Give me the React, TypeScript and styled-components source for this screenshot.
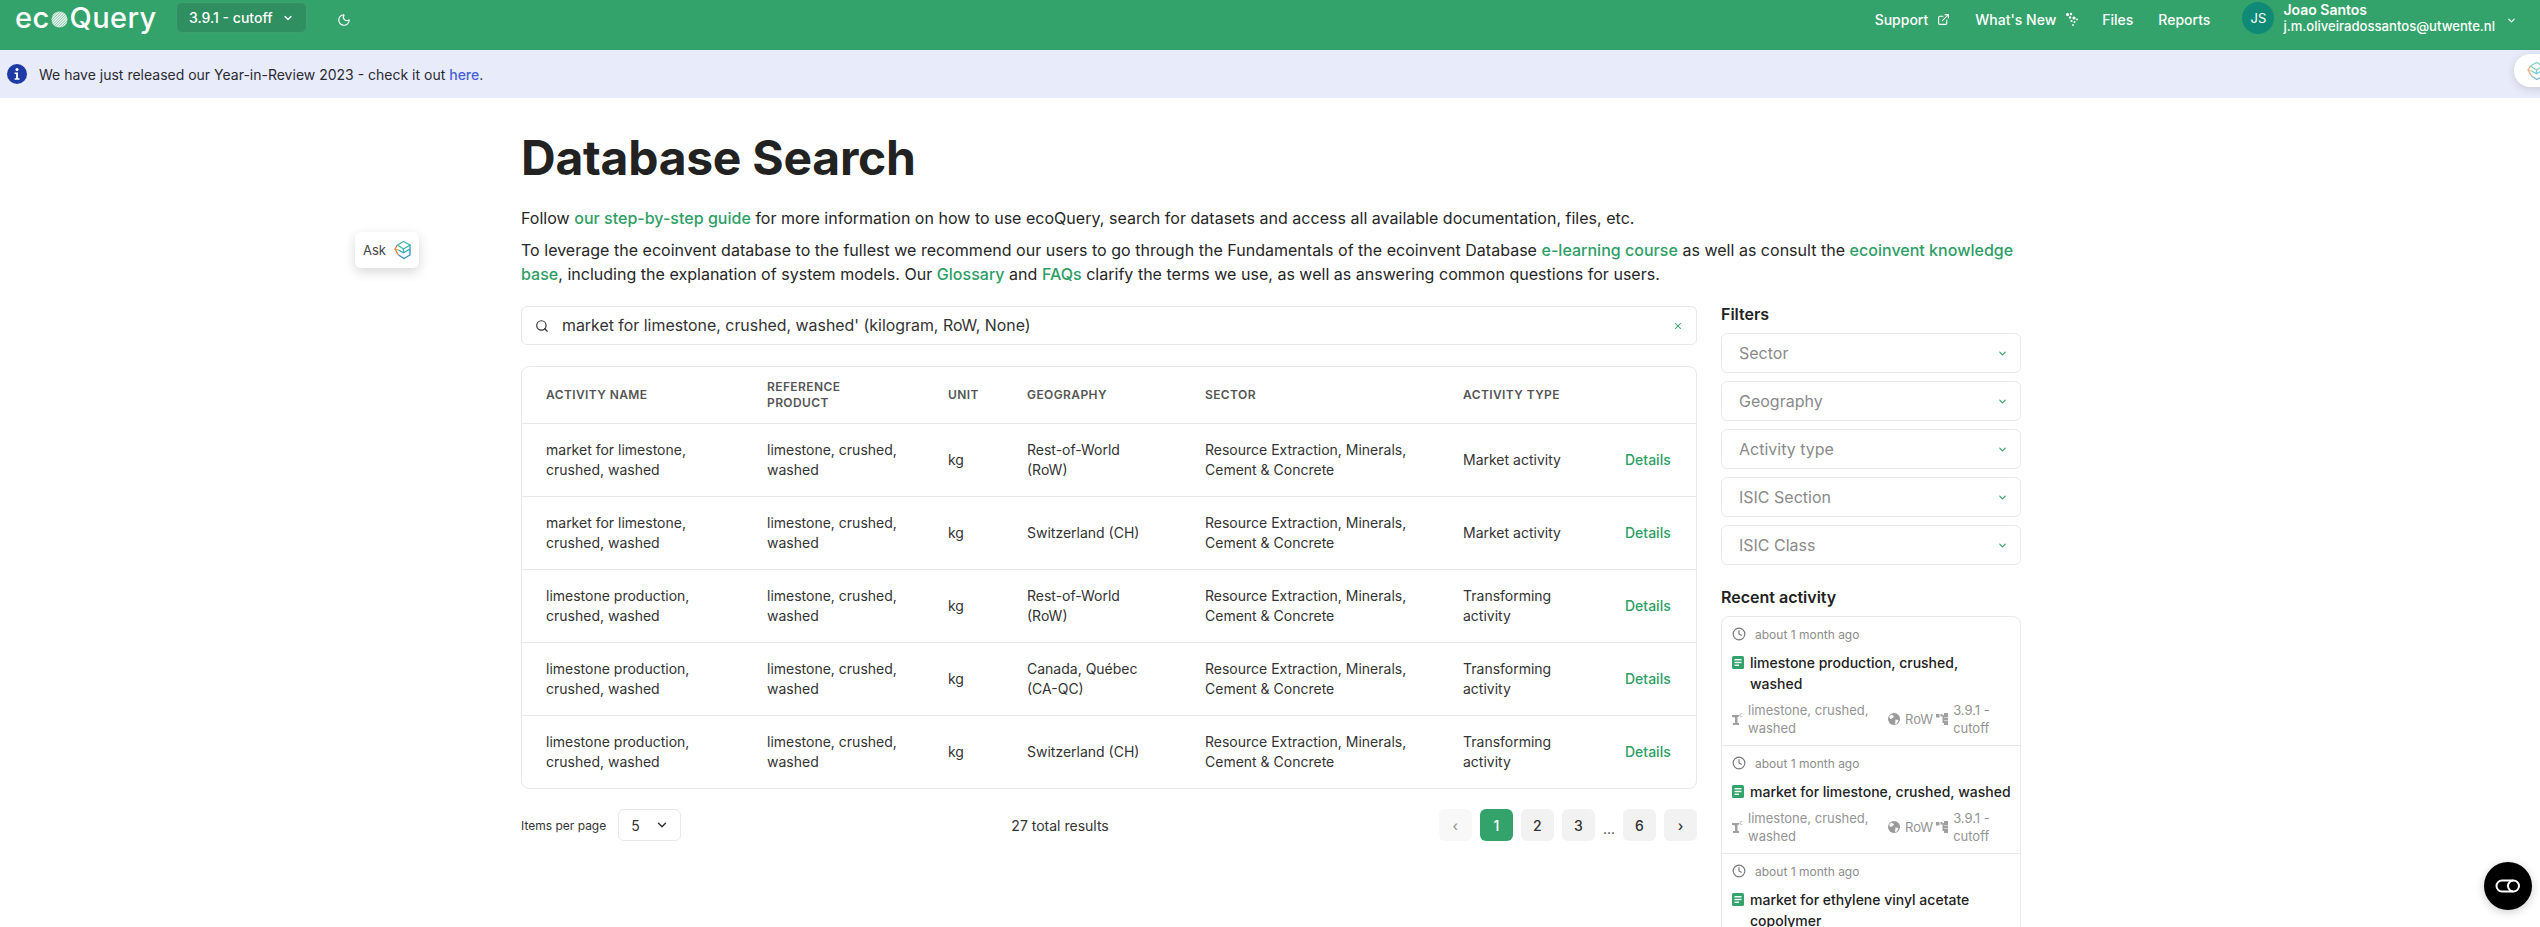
import React from "react"
import styled, { createGlobalStyle } from "styled-components"
import { ChevronDown, Clock, ExternalLink, Moon, Search, X } from "lucide-react"

const GREEN = "#34a36b"
const LINK = "#2e9e66"
const BORDER = "#e9e9e9"

const GlobalStyle = createGlobalStyle`
  html, body {
    margin: 0;
    padding: 0;
    height: 927px;
    overflow: hidden;
    background: #fff;
    font-family: Inter, "Liberation Sans", sans-serif;
    color: #222;
  }
  * { box-sizing: border-box; }
`

const Page = styled.div`
  position: relative;
  width: 2540px;
  height: 927px;
  overflow: hidden;
`

const Header = styled.header`
  height: 50px;
  background: ${GREEN};
  color: #fff;
  display: flex;
  justify-content: space-between;
  padding: 2px 23px 0 15px;
`
const HeaderLeft = styled.div`
  display: flex;
  align-items: flex-start;
`
const Logo = styled.div`
  display: flex;
  align-items: center;
  height: 31px;
  width: 161px;
  font-size: 29px;
  font-weight: 500;
  letter-spacing: 0.4px;
  line-height: 31px;
`
const VersionSelect = styled.div`
  width: 131px;
  height: 31px;
  background: #2f8f60;
  border: 1px solid #3f9f6f;
  border-radius: 6px;
  display: flex;
  align-items: center;
  gap: 10px;
  padding-left: 12px;
  font-size: 14px;
  font-weight: 500;
`
const ThemeToggle = styled.div`
  margin: 9px 0 0 30px;
  height: 18px;
`
const HeaderRight = styled.nav`
  display: flex;
  align-items: flex-start;
`
const NavItem = styled.a<{ $gap: number }>`
  display: flex;
  align-items: center;
  height: 34px;
  gap: 9px;
  margin-right: ${(p) => p.$gap}px;
  font-size: 14px;
  font-weight: 500;
  color: #fff;
`
const Avatar = styled.div`
  width: 32px;
  height: 32px;
  border-radius: 50%;
  background: #0f8a76;
  display: flex;
  align-items: center;
  justify-content: center;
  font-size: 13px;
  margin-right: 9px;
`
const UserBlock = styled.div`
  font-size: 13.1px;
  line-height: 16px;
  font-weight: 500;
  margin-right: 11px;
`
const UserName = styled.div`
  font-size: 14px;
  font-weight: 600;
`
const UserChevron = styled.div`
  margin-top: 8px;
`

const Banner = styled.div`
  height: 48px;
  background: #e8ebf9;
  display: flex;
  align-items: center;
  gap: 12px;
  padding-left: 7px;
  font-size: 14px;
  color: #2a2a33;
`
const BannerLink = styled.a`
  color: #4461d8;
  font-weight: 500;
`

const Main = styled.main`
  width: 1500px;
  margin-left: 521px;
  padding-top: 32px;
`
const Title = styled.h1`
  margin: 0 0 20px;
  font-size: 48px;
  line-height: 56px;
  font-weight: 700;
  letter-spacing: -0.26px;
  color: #222;
`
const Paragraph = styled.p<{ $mb: number }>`
  margin: 0 0 ${(p) => p.$mb}px;
  font-size: 16px;
  line-height: 24px;
  letter-spacing: 0.02px;
  color: #262626;
`
const TextLink = styled.a`
  color: ${LINK};
  font-weight: 500;
`

const Columns = styled.div`
  display: grid;
  grid-template-columns: 1176px 300px;
  gap: 24px;
  margin-top: 20px;
`

const SearchBox = styled.div`
  height: 39px;
  border: 1px solid ${BORDER};
  border-radius: 6px;
  display: flex;
  align-items: center;
  padding: 0 13px;
  font-size: 15.9px;
  color: #333;
`
const SearchText = styled.span`
  margin-left: 13px;
  flex: 1;
`

const TableCard = styled.div`
  margin-top: 21px;
  border: 1px solid ${BORDER};
  border-radius: 8px;
`
const Table = styled.table`
  width: 100%;
  table-layout: fixed;
  border-collapse: collapse;
  font-size: 14px;
  line-height: 20px;
  color: #333;
`
const Th = styled.th<{ $w: number }>`
  width: ${(p) => p.$w}px;
  height: 56px;
  padding: 0 24px;
  text-align: left;
  font-size: 12px;
  line-height: 16px;
  font-weight: 600;
  letter-spacing: 0.4px;
  color: #555;
  text-transform: uppercase;
`
const Tr = styled.tr`
  height: 73px;
  border-top: 1px solid ${BORDER};
`
const Td = styled.td`
  padding: 0 24px;
`
const DetailsCell = styled.td`
  padding: 0 24px;
  color: ${LINK};
  font-weight: 500;
`

const Footer = styled.div`
  margin-top: 20px;
  display: flex;
  justify-content: space-between;
  align-items: center;
`
const PerPage = styled.div`
  display: flex;
  align-items: center;
  gap: 12px;
  font-size: 12px;
  color: #333;
`
const PerPageSelect = styled.div`
  width: 63px;
  height: 32px;
  border: 1px solid ${BORDER};
  border-radius: 6px;
  display: flex;
  align-items: center;
  justify-content: space-between;
  padding: 0 11px 0 12px;
  font-size: 14px;
`
const Total = styled.div`
  font-size: 14px;
  color: #333;
`
const Pager = styled.div`
  display: flex;
  gap: 8px;
  align-items: center;
`
const PageButton = styled.div<{ $active?: boolean; $muted?: boolean }>`
  width: 33px;
  height: 32px;
  border-radius: 6px;
  display: flex;
  align-items: center;
  justify-content: center;
  font-size: 14px;
  font-weight: 500;
  background: ${(p) => (p.$active ? GREEN : p.$muted ? "#f9f8f8" : "#f3f2f2")};
  color: ${(p) => (p.$active ? "#fff" : p.$muted ? "#999" : "#333")};
`
const Ellipsis = styled.div`
  font-size: 14px;
  color: #444;
  margin-top: 6px;
`

const SectionTitle = styled.h2`
  margin: 0 0 10px;
  font-size: 16px;
  line-height: 17px;
  font-weight: 600;
  color: #222;
`
const FilterList = styled.div`
  display: flex;
  flex-direction: column;
  gap: 8px;
  margin-bottom: 24px;
`
const FilterBox = styled.div`
  height: 40px;
  border: 1px solid ${BORDER};
  border-radius: 6px;
  display: flex;
  align-items: center;
  justify-content: space-between;
  padding: 0 12px 0 17px;
  font-size: 16px;
  color: #8a8a8a;
`
const ActivityList = styled.div`
  border: 1px solid ${BORDER};
  border-radius: 8px 8px 0 0;
`
const ActivityItem = styled.div`
  padding: 7px 8px 8px 10px;
  & + & {
    border-top: 1px solid ${BORDER};
  }
`
const ActivityTime = styled.div`
  display: flex;
  align-items: center;
  gap: 9px;
  height: 20px;
  font-size: 12px;
  color: #8c8c8c;
`
const ActivityTitle = styled.div`
  display: flex;
  margin-top: 8px;
  gap: 6px;
  font-size: 14px;
  line-height: 21px;
  font-weight: 500;
  color: #222;
`
const DocIconWrap = styled.div`
  flex: none;
  height: 21px;
  display: flex;
  align-items: center;
`
const ActivityMeta = styled.div`
  display: flex;
  align-items: center;
  margin-top: 7px;
  font-size: 13px;
  line-height: 18px;
  color: #949494;
`
const MetaText = styled.div<{ $w: number }>`
  width: ${(p) => p.$w}px;
  flex: none;
`

const AskButton = styled.div`
  position: absolute;
  left: 355px;
  top: 232px;
  width: 64px;
  height: 36px;
  background: #fff;
  border-radius: 6px;
  box-shadow: 0 4px 12px rgba(0, 0, 0, 0.16);
  display: flex;
  align-items: center;
  gap: 7px;
  padding-left: 8px;
  font-size: 13px;
  color: #444;
`
const SideWidget = styled.div`
  position: absolute;
  left: 2514px;
  top: 54px;
  width: 50px;
  height: 33px;
  background: #fff;
  border-radius: 16px;
  box-shadow: 0 2px 8px rgba(0, 0, 0, 0.14);
  padding: 7px 0 0 12px;
`
const ChatBubble = styled.div`
  position: absolute;
  left: 2484px;
  top: 862px;
  width: 48px;
  height: 48px;
  border-radius: 50%;
  background: #000;
  box-shadow: 0 2px 10px rgba(0, 0, 0, 0.2);
  display: flex;
  align-items: center;
  justify-content: center;
`

const LogoDisc = () => (
  <svg width="17" height="17" viewBox="0 0 18 18" style={{ margin: "3px 2px 0 1px" }}>
    <defs>
      <pattern id="hatch" width="2" height="2" patternUnits="userSpaceOnUse" patternTransform="rotate(45)">
        <rect width="2" height="2" fill="#7cc5a0" />
        <rect width="1.1" height="2" fill="#fff" />
      </pattern>
    </defs>
    <circle cx="9" cy="9" r="8.5" fill="url(#hatch)" />
  </svg>
)

const Sparkles = () => (
  <svg width="13" height="14" viewBox="0 0 13 14" fill="#fff">
    <circle cx="2.5" cy="2.5" r="1.6" />
    <circle cx="6" cy="2" r="1.2" />
    <circle cx="5" cy="5.5" r="1.2" />
    <circle cx="9" cy="6" r="1.6" />
    <circle cx="12" cy="7.5" r="0.9" />
    <circle cx="6.5" cy="9" r="1.1" />
    <circle cx="9.5" cy="10" r="1" />
    <circle cx="8" cy="13" r="0.9" />
  </svg>
)

const InfoBadge = () => (
  <svg width="20" height="20" viewBox="0 0 20 20">
    <circle cx="10" cy="10" r="10" fill="#1e3aa5" />
    <circle cx="10" cy="5.6" r="1.5" fill="#fff" />
    <path d="M7.6 8.6h3.4v5.6h1.5v1.5H7.6v-1.5h1.5v-4.1H7.6z" fill="#fff" />
  </svg>
)

const AskLogo = ({ soft = false }: { soft?: boolean }) => (
  <svg width="20" height="20" viewBox="0 0 20 20" fill="none" strokeWidth="1.3" opacity={soft ? 0.65 : 1}>
    <path d="M4.5 5 10.5 1.5 17 5 10.5 9z" stroke="#3fb6a8" />
    <path d="M17 5v4l-6.5 3.8L5.5 10" stroke="#2aa5bf" />
    <path d="M17 9v6l-6 3.5L5.5 15" stroke="#2f8fb8" />
    <path d="M10.5 9v3.8" stroke="#3fb6a8" />
    <path d="M4.5 5 2 9l3.5 6" stroke="#e2803f" />
    <path d="M2 9l3.5 1" stroke="#d9a13f" />
  </svg>
)

const DocIcon = () => (
  <svg width="12" height="13" viewBox="0 0 12 13">
    <rect width="12" height="13" rx="1.5" fill={GREEN} />
    <rect x="2.5" y="3" width="7" height="1.4" fill="#fff" />
    <rect x="2.5" y="5.8" width="7" height="1.4" fill="#fff" />
    <rect x="2.5" y="8.6" width="4.5" height="1.4" fill="#fff" />
  </svg>
)

const ProductIcon = () => (
  <svg width="11" height="12" viewBox="0 0 11 12" fill="#a0a0a0" style={{ flex: "none", marginRight: 5 }}>
    <path d="M0 2h7v1.6L5.5 4v6H7v2H1v-2h2V4.4L0 4z" />
    <path d="M7.5 2a1.8 1.8 0 0 1 3-1.3l-.5.6a1 1 0 1 0 0 1.4l.5.6a1.8 1.8 0 0 1-3-1.3z" />
  </svg>
)

const GlobeIcon = () => (
  <svg width="12" height="12" viewBox="0 0 12 12" style={{ flex: "none", marginRight: 5 }}>
    <circle cx="6" cy="6" r="6" fill="#9a9a9a" />
    <path d="M3 1.5 6 3 5 5 2.5 6 1 4zM7.5 6.5l3 .5-1.5 3.5L7 11z" fill="#fff" />
  </svg>
)

const TreeIcon = () => (
  <svg width="12" height="12" viewBox="0 0 12 12" fill="#a0a0a0" style={{ flex: "none", margin: "0 5px 0 3px" }}>
    <rect x="0" y="1" width="3.5" height="3.5" />
    <rect x="4.5" y="1" width="2" height="2.5" />
    <rect x="8" y="0" width="4" height="4" />
    <rect x="8" y="4.5" width="4" height="3" />
    <rect x="8" y="8" width="4" height="4" />
    <rect x="6.5" y="2" width="1.5" height="8" />
  </svg>
)

const ToggleIcon = () => (
  <svg width="26" height="14" viewBox="0 0 26 14" fill="none" stroke="#fff" strokeWidth="2">
    <path d="M18 1.5H7a5.5 5.5 0 0 0 0 11h11" />
    <circle cx="18.5" cy="7" r="5.5" />
  </svg>
)

type Row = { name: string; geo: string; type: string }

const rows: Row[] = [
  { name: "market for limestone, crushed, washed", geo: "Rest-of-World (RoW)", type: "Market activity" },
  { name: "market for limestone, crushed, washed", geo: "Switzerland (CH)", type: "Market activity" },
  { name: "limestone production, crushed, washed", geo: "Rest-of-World (RoW)", type: "Transforming activity" },
  { name: "limestone production, crushed, washed", geo: "Canada, Québec (CA-QC)", type: "Transforming activity" },
  { name: "limestone production, crushed, washed", geo: "Switzerland (CH)", type: "Transforming activity" },
]

const recent = [
  "limestone production, crushed, washed",
  "market for limestone, crushed, washed",
  "market for ethylene vinyl acetate copolymer",
]

const filters = ["Sector", "Geography", "Activity type", "ISIC Section", "ISIC Class"]

export default function App() {
  return (
    <Page>
      <GlobalStyle />
      <Header>
        <HeaderLeft>
          <Logo>
            ec
            <LogoDisc />
            Query
          </Logo>
          <VersionSelect>
            3.9.1 - cutoff
            <ChevronDown size={12} strokeWidth={2.5} />
          </VersionSelect>
          <ThemeToggle>
            <Moon size={14} />
          </ThemeToggle>
        </HeaderLeft>
        <HeaderRight>
          <NavItem $gap={25}>
            Support
            <ExternalLink size={13} />
          </NavItem>
          <NavItem $gap={24}>
            What's New
            <Sparkles />
          </NavItem>
          <NavItem $gap={25}>Files</NavItem>
          <NavItem $gap={32}>Reports</NavItem>
          <Avatar>JS</Avatar>
          <UserBlock>
            <UserName>Joao Santos</UserName>
            j.m.oliveiradossantos@utwente.nl
          </UserBlock>
          <UserChevron>
            <ChevronDown size={11} strokeWidth={2.5} />
          </UserChevron>
        </HeaderRight>
      </Header>
      <Banner>
        <InfoBadge />
        <span>
          We have just released our Year-in-Review 2023 - check it out <BannerLink>here</BannerLink>.
        </span>
      </Banner>
      <Main>
        <Title>Database Search</Title>
        <Paragraph $mb={8}>
          Follow <TextLink>our step-by-step guide</TextLink> for more information on how to use ecoQuery, search for
          datasets and access all available documentation, files, etc.
        </Paragraph>
        <Paragraph $mb={0}>
          To leverage the ecoinvent database to the fullest we recommend our users to go through the Fundamentals of the
          ecoinvent Database <TextLink>e-learning course</TextLink> as well as consult the{" "}
          <TextLink>ecoinvent knowledge base</TextLink>, including the explanation of system models. Our{" "}
          <TextLink>Glossary</TextLink> and <TextLink>FAQs</TextLink> clarify the terms we use, as well as answering
          common questions for users.
        </Paragraph>
        <Columns>
          <div>
            <SearchBox>
              <Search size={14} color="#333" />
              <SearchText>market for limestone, crushed, washed' (kilogram, RoW, None)</SearchText>
              <X size={10} color={LINK} strokeWidth={2.5} />
            </SearchBox>
            <TableCard>
              <Table>
                <thead>
                  <tr>
                    <Th $w={221}>Activity name</Th>
                    <Th $w={181}>Reference product</Th>
                    <Th $w={79}>Unit</Th>
                    <Th $w={178}>Geography</Th>
                    <Th $w={258}>Sector</Th>
                    <Th $w={162}>Activity type</Th>
                    <Th $w={95} />
                  </tr>
                </thead>
                <tbody>
                  {rows.map((r, i) => (
                    <Tr key={i}>
                      <Td>{r.name}</Td>
                      <Td>limestone, crushed, washed</Td>
                      <Td>kg</Td>
                      <Td>{r.geo}</Td>
                      <Td>Resource Extraction, Minerals, Cement &amp; Concrete</Td>
                      <Td>{r.type}</Td>
                      <DetailsCell>Details</DetailsCell>
                    </Tr>
                  ))}
                </tbody>
              </Table>
            </TableCard>
            <Footer>
              <PerPage>
                Items per page
                <PerPageSelect>
                  5
                  <ChevronDown size={14} strokeWidth={2.5} />
                </PerPageSelect>
              </PerPage>
              <Total>27 total results</Total>
              <Pager>
                <PageButton $muted>‹</PageButton>
                <PageButton $active>1</PageButton>
                <PageButton>2</PageButton>
                <PageButton>3</PageButton>
                <Ellipsis>...</Ellipsis>
                <PageButton>6</PageButton>
                <PageButton>›</PageButton>
              </Pager>
            </Footer>
          </div>
          <aside>
            <SectionTitle>Filters</SectionTitle>
            <FilterList>
              {filters.map((f) => (
                <FilterBox key={f}>
                  {f}
                  <ChevronDown size={11} color={LINK} strokeWidth={2.5} />
                </FilterBox>
              ))}
            </FilterList>
            <SectionTitle>Recent activity</SectionTitle>
            <ActivityList>
              {recent.map((title) => (
                <ActivityItem key={title}>
                  <ActivityTime>
                    <Clock size={14} color="#777" />
                    about 1 month ago
                  </ActivityTime>
                  <ActivityTitle>
                    <DocIconWrap>
                      <DocIcon />
                    </DocIconWrap>
                    <span>{title}</span>
                  </ActivityTitle>
                  <ActivityMeta>
                    <ProductIcon />
                    <MetaText $w={140}>limestone, crushed, washed</MetaText>
                    <GlobeIcon />
                    RoW
                    <TreeIcon />
                    <MetaText $w={54}>3.9.1 - cutoff</MetaText>
                  </ActivityMeta>
                </ActivityItem>
              ))}
            </ActivityList>
          </aside>
        </Columns>
      </Main>
      <AskButton>
        Ask
        <AskLogo />
      </AskButton>
      <SideWidget>
        <AskLogo soft />
      </SideWidget>
      <ChatBubble>
        <ToggleIcon />
      </ChatBubble>
    </Page>
  )
}
